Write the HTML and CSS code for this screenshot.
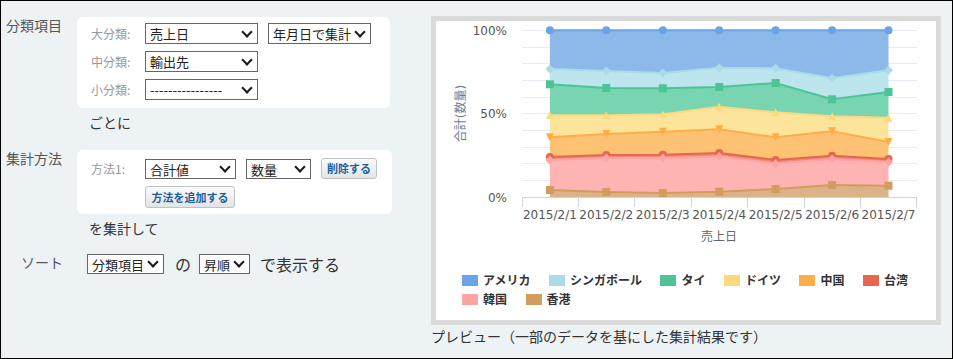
FILE: index.html
```html
<!DOCTYPE html>
<html lang="ja">
<head>
<meta charset="utf-8">
<title>集計設定</title>
<link rel="stylesheet" href="styles.css">
</head>
<body>
<div class="page">
  <div class="settings">
    <div class="section">
      <div class="sec-label">分類項目</div>
      <div class="sec-body">
        <div class="panel panel-class">
          <span class="field-label">大分類:</span>
          <span class="sel sel-h21 w113"><select><option>売上日</option></select></span>
          <span class="sel sel-h21 w103 ml10"><select><option>年月日で集計</option></select></span>
          <span class="field-label">中分類:</span>
          <span class="sel sel-h21 w113"><select><option>輸出先</option></select></span>
          <span></span>
          <span class="field-label">小分類:</span>
          <span class="sel sel-h21 w113"><select><option>----------------</option></select></span>
          <span></span>
        </div>
        <div class="after">ごとに</div>
      </div>
    </div>

    <div class="section section-method">
      <div class="sec-label">集計方法</div>
      <div class="sec-body">
        <div class="panel panel-method">
          <span class="field-label">方法1:</span>
          <div class="method-row">
            <span class="sel sel-h20 w91"><select><option>合計値</option></select></span>
            <span class="sel sel-h20 w65"><select><option>数量</option></select></span>
            <button class="btn" type="button">削除する</button>
          </div>
          <span></span>
          <div class="method-row">
            <button class="btn btn-add" type="button">方法を追加する</button>
          </div>
        </div>
        <div class="after">を集計して</div>
      </div>
    </div>

    <div class="sort-row">
      <div class="sec-label sort-label">ソート</div>
      <div class="sort-body">
        <span class="sel sel-h20 w77"><select><option>分類項目</option></select></span>
        <span class="sort-no">の</span>
        <span class="sel sel-h20 w51"><select><option>昇順</option></select></span>
        <span class="sort-text">で表示する</span>
      </div>
    </div>
  </div>

  <div class="preview">
    <div class="chart-frame">
      <svg class="chart" width="500" height="241" viewBox="0 0 500 241">
        <defs>
          <marker id="m-am" viewBox="-5 -5 10 10" markerWidth="10" markerHeight="10" markerUnits="userSpaceOnUse" overflow="visible"><circle r="4" fill="#6aa3e6"/></marker>
          <marker id="m-sg" viewBox="-5 -5 10 10" markerWidth="10" markerHeight="10" markerUnits="userSpaceOnUse" overflow="visible"><path d="M0-4.5 4.5 0 0 4.5-4.5 0Z" fill="#a9dce8"/></marker>
          <marker id="m-th" viewBox="-5 -5 10 10" markerWidth="10" markerHeight="10" markerUnits="userSpaceOnUse" overflow="visible"><rect x="-4" y="-4" width="8" height="8" fill="#4bc595"/></marker>
          <marker id="m-de" viewBox="-5 -5 10 10" markerWidth="10" markerHeight="10" markerUnits="userSpaceOnUse" overflow="visible"><path d="M0-4 4 4-4 4Z" fill="#fbd97d"/></marker>
          <marker id="m-cn" viewBox="-5 -5 10 10" markerWidth="10" markerHeight="10" markerUnits="userSpaceOnUse" overflow="visible"><path d="M-4-4 4-4 0 4Z" fill="#ffad47"/></marker>
          <marker id="m-tw" viewBox="-5 -5 10 10" markerWidth="10" markerHeight="10" markerUnits="userSpaceOnUse" overflow="visible"><circle r="4" fill="#e8654f"/></marker>
          <marker id="m-kr" viewBox="-5 -5 10 10" markerWidth="10" markerHeight="10" markerUnits="userSpaceOnUse" overflow="visible"><path d="M0-4.5 4.5 0 0 4.5-4.5 0Z" fill="#ffa3a3"/></marker>
          <marker id="m-hk" viewBox="-5 -5 10 10" markerWidth="10" markerHeight="10" markerUnits="userSpaceOnUse" overflow="visible"><rect x="-4" y="-4" width="8" height="8" fill="#d09d5f"/></marker>
        </defs>

        <g class="grid">
          <line x1="85.7" x2="480.7" y1="9.5" y2="9.5"/>
          <line x1="85.7" x2="480.7" y1="26.5" y2="26.5"/>
          <line x1="85.7" x2="480.7" y1="42.5" y2="42.5"/>
          <line x1="85.7" x2="480.7" y1="59.5" y2="59.5"/>
          <line x1="85.7" x2="480.7" y1="76.5" y2="76.5"/>
          <line x1="85.7" x2="480.7" y1="92.5" y2="92.5"/>
          <line x1="85.7" x2="480.7" y1="109.5" y2="109.5"/>
          <line x1="85.7" x2="480.7" y1="126.5" y2="126.5"/>
          <line x1="85.7" x2="480.7" y1="142.5" y2="142.5"/>
          <line x1="85.7" x2="480.7" y1="159.5" y2="159.5"/>
        </g>

        <g class="areas">
          <polygon fill="#8db8ea" points="113.9,9.3 170.3,9.3 226.8,9.3 283.2,9.3 339.6,9.3 396.1,9.3 452.5,9.3 452.5,49.3 396.1,57.3 339.6,47.3 283.2,46.7 226.8,52 170.3,50 113.9,48"/>
          <polygon fill="#bde5ee" points="113.9,48 170.3,50 226.8,52 283.2,46.7 339.6,47.3 396.1,57.3 452.5,49.3 452.5,71 396.1,78.3 339.6,62 283.2,66 226.8,67.3 170.3,67 113.9,63.3"/>
          <polygon fill="#79d5b1" points="113.9,63.3 170.3,67 226.8,67.3 283.2,66 339.6,62 396.1,78.3 452.5,71 452.5,96.7 396.1,95.3 339.6,91.3 283.2,85.7 226.8,93.3 170.3,94.3 113.9,94.3"/>
          <polygon fill="#fde49b" points="113.9,94.3 170.3,94.3 226.8,93.3 283.2,85.7 339.6,91.3 396.1,95.3 452.5,96.7 452.5,121 396.1,110.3 339.6,116.3 283.2,108.3 226.8,110.7 170.3,113 113.9,116.3"/>
          <polygon fill="#fec275" points="113.9,116.3 170.3,113 226.8,110.7 283.2,108.3 339.6,116.3 396.1,110.3 452.5,121 452.5,138 396.1,134.7 339.6,139 283.2,132 226.8,133.7 170.3,134 113.9,136"/>
          <polygon fill="#ec8b7b" points="113.9,136 170.3,134 226.8,133.7 283.2,132 339.6,139 396.1,134.7 452.5,138 452.5,141 396.1,138 339.6,142.5 283.2,135.5 226.8,137 170.3,137 113.9,139"/>
          <polygon fill="#ffb4b4" points="113.9,139 170.3,137 226.8,137 283.2,135.5 339.6,142.5 396.1,138 452.5,141 452.5,164.7 396.1,164 339.6,168 283.2,170.7 226.8,172 170.3,171 113.9,169"/>
          <polygon fill="#dcb388" points="113.9,169 170.3,171 226.8,172 283.2,170.7 339.6,168 396.1,164 452.5,164.7 452.5,176.3 113.9,176.3"/>
        </g>

        <g class="lines">
          <polyline stroke="#6aa3e6" marker-start="url(#m-am)" marker-mid="url(#m-am)" marker-end="url(#m-am)" points="113.9,9.3 170.3,9.3 226.8,9.3 283.2,9.3 339.6,9.3 396.1,9.3 452.5,9.3"/>
          <polyline stroke="#a9dce8" marker-start="url(#m-sg)" marker-mid="url(#m-sg)" marker-end="url(#m-sg)" points="113.9,48 170.3,50 226.8,52 283.2,46.7 339.6,47.3 396.1,57.3 452.5,49.3"/>
          <polyline stroke="#4bc595" marker-start="url(#m-th)" marker-mid="url(#m-th)" marker-end="url(#m-th)" points="113.9,63.3 170.3,67 226.8,67.3 283.2,66 339.6,62 396.1,78.3 452.5,71"/>
          <polyline stroke="#fbd97d" marker-start="url(#m-de)" marker-mid="url(#m-de)" marker-end="url(#m-de)" points="113.9,94.3 170.3,94.3 226.8,93.3 283.2,85.7 339.6,91.3 396.1,95.3 452.5,96.7"/>
          <polyline stroke="#ffad47" marker-start="url(#m-cn)" marker-mid="url(#m-cn)" marker-end="url(#m-cn)" points="113.9,116.3 170.3,113 226.8,110.7 283.2,108.3 339.6,116.3 396.1,110.3 452.5,121"/>
          <polyline stroke="#e8654f" marker-start="url(#m-tw)" marker-mid="url(#m-tw)" marker-end="url(#m-tw)" points="113.9,136 170.3,134 226.8,133.7 283.2,132 339.6,139 396.1,134.7 452.5,138"/>
          <polyline stroke="#ffa3a3" marker-start="url(#m-kr)" marker-mid="url(#m-kr)" marker-end="url(#m-kr)" points="113.9,139 170.3,137 226.8,137 283.2,135.5 339.6,142.5 396.1,138 452.5,141"/>
          <polyline stroke="#d09d5f" marker-start="url(#m-hk)" marker-mid="url(#m-hk)" marker-end="url(#m-hk)" points="113.9,169 170.3,171 226.8,172 283.2,170.7 339.6,168 396.1,164 452.5,164.7"/>
        </g>

        <g class="axis">
          <line x1="85.7" x2="480.7" y1="176.5" y2="176.5"/>
          <line x1="86" x2="86" y1="176" y2="186"/>
          <line x1="142.5" x2="142.5" y1="176" y2="186"/>
          <line x1="198.5" x2="198.5" y1="176" y2="186"/>
          <line x1="255" x2="255" y1="176" y2="186"/>
          <line x1="311.5" x2="311.5" y1="176" y2="186"/>
          <line x1="368" x2="368" y1="176" y2="186"/>
          <line x1="424.5" x2="424.5" y1="176" y2="186"/>
          <line x1="480.5" x2="480.5" y1="176" y2="186"/>
        </g>

        <g class="ylabels">
          <text x="71" y="13.6">100%</text>
          <text x="71" y="97.1">50%</text>
          <text x="71" y="180.6">0%</text>
        </g>
        <text class="ytitle" transform="translate(24.5 92.5) rotate(-90)" y="4.2">合計(数量)</text>

        <g class="xlabels">
          <text x="113.9" y="198.3">2015/2/1</text>
          <text x="170.3" y="198.3">2015/2/2</text>
          <text x="226.8" y="198.3">2015/2/3</text>
          <text x="283.2" y="198.3">2015/2/4</text>
          <text x="339.6" y="198.3">2015/2/5</text>
          <text x="396.1" y="198.3">2015/2/6</text>
          <text x="452.5" y="198.3">2015/2/7</text>
        </g>
        <text class="xtitle" x="283" y="219.5">売上日</text>
      </svg>

      <ul class="legend">
        <li><span class="sw sw-am"></span>アメリカ</li>
        <li><span class="sw sw-sg"></span>シンガポール</li>
        <li><span class="sw sw-th"></span>タイ</li>
        <li><span class="sw sw-de"></span>ドイツ</li>
        <li><span class="sw sw-cn"></span>中国</li>
        <li><span class="sw sw-tw"></span>台湾</li>
        <li><span class="sw sw-kr"></span>韓国</li>
        <li><span class="sw sw-hk"></span>香港</li>
      </ul>
    </div>
    <p class="caption">プレビュー（一部のデータを基にした集計結果です）</p>
  </div>
</div>
</body>
</html>
```

FILE: styles.css
```css
html, body {
  margin: 0;
  padding: 0;
}

.page {
  width: 953px;
  height: 359px;
  box-sizing: border-box;
  border: 1px solid #000;
  background: #edf2f5;
  display: flex;
  font-family: "Noto Sans CJK JP", "Noto Sans", sans-serif;
  color: #333;
  overflow: hidden;
}

/* ---------- left settings column ---------- */
.settings {
  flex: none;
  width: 430px;
  box-sizing: border-box;
  padding-top: 16px;
}

.section {
  display: grid;
  grid-template-columns: 76px auto;
  align-items: start;
}

.section-method {
  margin-top: 18px;
}

.sec-label {
  padding-left: 5px;
  font-size: 14px;
  line-height: 16px;
  color: #555;
}

.panel {
  background: #fff;
  border-radius: 6px;
  box-sizing: border-box;
}

.panel-class {
  width: 313px;
  padding: 6px 0 8px 14px;
  display: grid;
  grid-template-columns: 54px auto auto;
  justify-content: start;
  justify-items: start;
  align-items: center;
  row-gap: 7px;
}

.panel-method {
  width: 315px;
  padding: 8px 0 6px 14px;
  display: grid;
  grid-template-columns: 54px auto;
  justify-content: start;
  align-items: center;
  row-gap: 7px;
}

.method-row {
  display: flex;
  align-items: center;
  gap: 10px;
}

.field-label {
  font-size: 12px;
  line-height: 16px;
  color: #999;
}

.after {
  padding-left: 12px;
  margin-top: 4px;
  font-size: 14px;
  line-height: 20px;
  color: #333;
}

/* select boxes */
.sel {
  position: relative;
  display: inline-block;
  box-sizing: border-box;
}

.sel select {
  -webkit-appearance: none;
  appearance: none;
  display: block;
  width: 100%;
  height: 100%;
  margin: 0;
  box-sizing: border-box;
  border: 1px solid #666;
  border-radius: 0;
  background: #fff;
  padding: 0 0 0 4px;
  font-family: "Noto Sans CJK JP", sans-serif;
  font-size: 13px;
  color: #222;
  outline: none;
}

.sel::after {
  content: "";
  position: absolute;
  right: 7px;
  top: 50%;
  width: 6px;
  height: 6px;
  margin-top: -6px;
  border-right: 2px solid #1a1a1a;
  border-bottom: 2px solid #1a1a1a;
  transform: rotate(45deg);
  pointer-events: none;
}

.sel-h21 { height: 21px; }
.sel-h20 { height: 20px; }
.w113 { width: 113px; }
.w103 { width: 103px; }
.w91 { width: 91px; }
.w77 { width: 77px; }
.w65 { width: 65px; }
.w51 { width: 51px; }
.ml10 { margin-left: 10px; }

/* buttons */
.btn {
  height: 21px;
  margin: 0;
  padding: 0 5px;
  box-sizing: border-box;
  border: 1px solid #bfc3c6;
  border-radius: 3px;
  background: linear-gradient(#fbfbfb, #e2e4e6);
  font-family: "Noto Sans CJK JP", sans-serif;
  font-size: 11px;
  font-weight: bold;
  line-height: 17px;
  color: #1d5f9e;
  white-space: nowrap;
}

.btn-add {
  height: 22px;
  width: 90px;
}

/* sort row */
.sort-row {
  display: grid;
  grid-template-columns: 76px auto;
  align-items: start;
  margin-top: 16px;
}

.sort-label {
  padding-left: 20px;
}

.sort-body {
  display: flex;
  align-items: center;
  margin-left: 10px;
  height: 20px;
}

.sort-no {
  margin: 0 8px 0 11px;
  font-size: 16px;
  line-height: 20px;
}

.sort-text {
  margin-left: 10px;
  font-size: 16px;
  line-height: 20px;
}

/* ---------- preview ---------- */
.preview {
  flex: none;
  padding-top: 15px;
}

.chart-frame {
  width: 510px;
  height: 309px;
  box-sizing: border-box;
  border: 5px solid #dadada;
  background: #fff;
}

.chart {
  display: block;
  font-family: "DejaVu Sans", "Noto Sans CJK JP", sans-serif;
}

.grid line {
  stroke: #e8ecf2;
  stroke-width: 1;
  shape-rendering: crispEdges;
}

.lines polyline {
  fill: none;
  stroke-width: 2;
}

.axis line {
  stroke: #ccd6eb;
  stroke-width: 1;
  shape-rendering: crispEdges;
}

.ylabels text {
  font-size: 12px;
  fill: #555;
  text-anchor: end;
}

.ytitle {
  font-size: 12px;
  fill: #6b7a99;
  text-anchor: middle;
}

.xlabels text {
  font-size: 12px;
  fill: #555;
  text-anchor: middle;
}

.xtitle {
  font-size: 12px;
  fill: #666;
  text-anchor: middle;
}

.legend {
  list-style: none;
  margin: 10px 0 0;
  padding: 0 0 0 26px;
  display: flex;
  flex-wrap: wrap;
  column-gap: 18.5px;
  row-gap: 3px;
}

.legend li {
  display: flex;
  align-items: center;
  font-size: 12px;
  font-weight: bold;
  line-height: 16px;
  color: #333;
}

.sw {
  display: inline-block;
  width: 16px;
  height: 11px;
  margin-right: 5px;
}

.sw-am { background: #6aa3e6; }
.sw-sg { background: #a9dce8; }
.sw-th { background: #4bc595; }
.sw-de { background: #fbd97d; }
.sw-cn { background: #ffad47; }
.sw-tw { background: #e8654f; }
.sw-kr { background: #ffa3a3; }
.sw-hk { background: #d09d5f; }

.caption {
  margin: 1px 0 0;
  font-size: 14px;
  line-height: 20px;
  color: #333;
}
```
